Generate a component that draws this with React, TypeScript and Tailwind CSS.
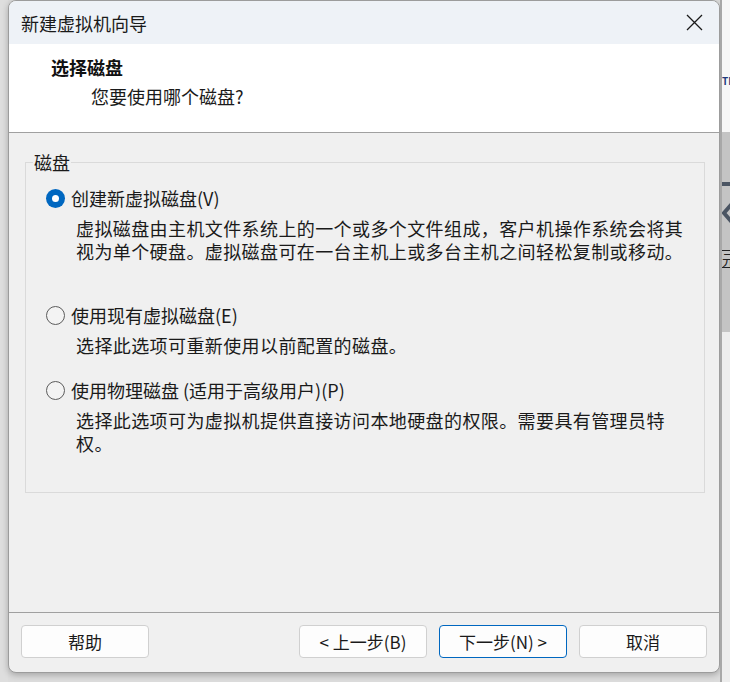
import React from "react";

const font = { fontFamily: '"Noto Sans CJK SC", "Noto Sans", sans-serif' };

function Radio({ checked }: { checked?: boolean }) {
  if (checked) {
    return (
      <span className="w-[19px] h-[19px] rounded-full bg-[#0067c0] flex items-center justify-center shrink-0">
        <span className="w-[7px] h-[7px] rounded-full bg-white" />
      </span>
    );
  }
  return <span className="w-[19px] h-[19px] rounded-full border border-[#5c5c5c] bg-[#f3f3f3] shrink-0" />;
}

function Option({
  checked,
  label,
  lines,
  className,
}: {
  checked?: boolean;
  label: React.ReactNode;
  lines: string[];
  className?: string;
}) {
  return (
    <div className={className}>
      <div className="flex items-center h-[24px] gap-[6px]">
        <Radio checked={checked} />
        <span className="text-[18px] leading-[24px] text-[#1a1a1a]">{label}</span>
      </div>
      <div className="ml-[30px] mt-[7px] text-[18px] leading-[23px] tracking-[0.4px] text-[#1a1a1a]">
        {lines.map((l, i) => (
          <div key={i} className="whitespace-nowrap h-[23px]">
            {l}
          </div>
        ))}
      </div>
    </div>
  );
}

function Btn({ children, primary }: { children: React.ReactNode; primary?: boolean }) {
  return (
    <div
      className={`w-[128px] h-[33px] rounded-[4px] bg-[#fdfdfd] flex items-center justify-center text-[17px] text-[#1a1a1a] border ${
        primary ? "border-[#0067c0]" : "border-[#d0d0d0]"
      }`}
    >
      {children}
    </div>
  );
}

export default function App() {
  return (
    <div className="w-[730px] h-[682px] flex bg-[#dcdcdc] overflow-hidden" style={font}>
      <div className="w-[8px] shrink-0 bg-[#dedede]" />
      <div className="w-[712px] h-[673px] shrink-0 flex flex-col border border-[#9c9c9c] rounded-[8px] overflow-hidden bg-[#f0f0f0] shadow-[0_2px_6px_rgba(0,0,0,0.25)]">
        {/* title bar */}
        <div className="h-[43px] shrink-0 bg-[#eef2f7] flex items-center justify-between pl-[12px] pr-[16px]">
          <span className="text-[18px] text-[#1a1a1a] leading-[24px]">新建虚拟机向导</span>
          <svg width="17" height="17" viewBox="0 0 17 17" fill="none" stroke="#1a1a1a" strokeWidth="1.3">
            <path d="M1 1 L16 16 M16 1 L1 16" />
          </svg>
        </div>
        {/* header */}
        <div className="h-[89px] shrink-0 bg-white border-b border-[#a0a0a0] pl-[42px] pt-[11px]">
          <div className="text-[18px] leading-[24px] font-bold text-[#111]">选择磁盘</div>
          <div className="ml-[40px] mt-[5px] text-[18px] leading-[24px] text-[#1a1a1a]">您要使用哪个磁盘?</div>
        </div>
        {/* body */}
        <div className="flex-1 pl-[16px] pr-[14px] pt-[29px]">
          <div className="relative h-[331px] border border-[#dadada] pl-[20px] pt-[23px]">
            <span className="absolute -top-[13px] left-[7px] px-[1px] bg-[#f0f0f0] text-[18px] leading-[24px] text-[#1a1a1a]">
              磁盘
            </span>
            <Option
              checked
              label="创建新虚拟磁盘(V)"
              lines={[
                "虚拟磁盘由主机文件系统上的一个或多个文件组成，客户机操作系统会将其",
                "视为单个硬盘。虚拟磁盘可在一台主机上或多台主机之间轻松复制或移动。",
              ]}
            />
            <Option
              className="mt-[40px]"
              label="使用现有虚拟磁盘(E)"
              lines={["选择此选项可重新使用以前配置的磁盘。"]}
            />
            <Option
              className="mt-[21px]"
              label="使用物理磁盘 (适用于高级用户)(P)"
              lines={["选择此选项可为虚拟机提供直接访问本地硬盘的权限。需要具有管理员特", "权。"]}
            />
          </div>
        </div>
        {/* footer */}
        <div className="h-[60px] shrink-0 border-t border-[#a0a0a0] flex items-start pt-[12px] px-[12px]">
          <Btn>帮助</Btn>
          <div className="flex-1" />
          <div className="flex gap-[12px]">
            <Btn>&lt; 上一步(B)</Btn>
            <Btn primary>下一步(N) &gt;</Btn>
            <Btn>取消</Btn>
          </div>
        </div>
      </div>
      <div className="w-[2px] shrink-0 bg-[#a8a8a8]" />
      <div className="flex-1 flex flex-col overflow-hidden">
        <div className="h-[132px] bg-[#f7f7f7] pt-[66px] overflow-hidden">
          <span className="text-[10px] font-bold text-[#1f3a7a] leading-[12px] whitespace-nowrap">TM</span>
        </div>
        <div className="h-[200px] bg-[#c4c4c4] flex flex-col overflow-hidden">
          <div className="mt-[50px] h-[4px] bg-[#4b5563]" />
          <div className="mt-[11px] overflow-hidden">
            <svg width="8" height="32" viewBox="0 0 8 32" fill="none" stroke="#4b5563" strokeWidth="4">
              <path d="M14 2 L2 16 L14 30" />
            </svg>
          </div>
          <div className="mt-[21px] text-[14px] leading-[16px] border-y border-[#222] whitespace-nowrap text-[#222]">元</div>
        </div>
        <div className="flex-1 bg-[#ededed]" />
      </div>
    </div>
  );
}
